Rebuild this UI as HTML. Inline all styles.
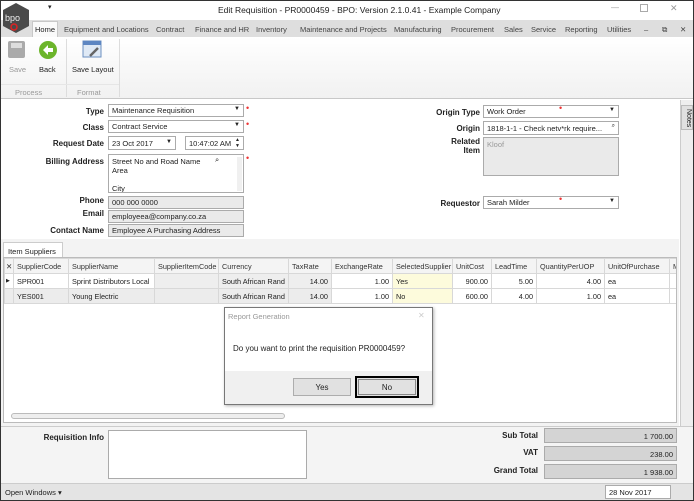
<!DOCTYPE html>
<html><head><meta charset="utf-8"><style>
*{box-sizing:border-box;margin:0;padding:0}
body{width:694px;height:501px;overflow:hidden;font-family:"Liberation Sans",sans-serif;font-size:8px;color:#222;background:#fff;position:relative}
.a{position:absolute}
.lbl{position:absolute;font-weight:bold;font-size:8px;text-align:right;color:#222}
.box{position:absolute;border:1px solid #ababab;background:#fff;font-size:7.5px;padding:2px 3px;white-space:nowrap;overflow:hidden}
.g{background:#eaeaea}
.req{position:absolute;color:#e33;font-size:9px}
.dd{position:absolute;right:3px;top:1px;font-size:6px}
table{border-collapse:collapse;font-size:7.3px}
td{border:1px solid #d8d8d8;height:15px;padding:0 3px;white-space:nowrap;overflow:hidden}
.r{text-align:right}
</style></head><body>
<div class="a" style="left:0;top:0;width:694px;height:501px;border:1px solid #333"></div>
<!-- title -->
<div class="a" style="left:1px;top:1px;width:692px;height:19px;background:#fff"></div>
<div class="a" style="left:218px;top:5px;font-size:8.5px">Edit Requisition - PR0000459 - BPO: Version 2.1.0.41 - Example Company</div>
<div class="a" style="left:48px;top:3px;font-size:7px">▾</div>
<div class="a" style="left:611px;top:3px;color:#999">—</div>
<div class="a" style="left:640px;top:4px;width:8px;height:8px;border:1px solid #aaa"></div>
<div class="a" style="left:670px;top:3px;color:#999;font-size:9px">✕</div>
<!-- tabs -->
<div class="a" style="left:1px;top:20px;width:692px;height:17px;background:#dedede"></div>
<div class="a" style="left:32px;top:21px;width:26px;height:17px;background:#fafafa;border:1px solid #c8c8c8;border-bottom:none"></div>
<div class="a" style="left:35px;top:25px;font-size:7.5px;white-space:nowrap;word-spacing:0"><span>Home</span>
<span style="position:absolute;left:29px;color:#444">Equipment and Locations</span>
<span style="position:absolute;left:121px;color:#444">Contract</span>
<span style="position:absolute;left:160px;color:#444">Finance and HR</span>
<span style="position:absolute;left:221px;color:#444">Inventory</span>
<span style="position:absolute;left:265px;color:#444">Maintenance and Projects</span>
<span style="position:absolute;left:359px;color:#444">Manufacturing</span>
<span style="position:absolute;left:416px;color:#444">Procurement</span>
<span style="position:absolute;left:469px;color:#444">Sales</span>
<span style="position:absolute;left:496px;color:#444">Service</span>
<span style="position:absolute;left:530px;color:#444">Reporting</span>
<span style="position:absolute;left:572px;color:#444">Utilities</span>
<span style="position:absolute;left:609px;color:#444">–</span>
<span style="position:absolute;left:627px;color:#444">⧉</span>
<span style="position:absolute;left:645px;color:#444">✕</span></div>
<!-- logo -->
<svg class="a" style="left:2px;top:2px;z-index:5" width="28" height="33"><polygon points="14,1 27,8 27,24 14,31 1,24 1,8" fill="#4a4a4a"/><text x="3" y="19" font-size="9" fill="#eee" font-family="Liberation Sans">bpo</text><circle cx="12" cy="25" r="3" fill="none" stroke="#d22" stroke-width="1.5"/></svg>
<!-- ribbon -->
<div class="a" style="left:1px;top:37px;width:692px;height:62px;background:linear-gradient(#fff,#f1f1f1);border-bottom:1px solid #c8c8c8"></div>
<div class="a" style="left:66px;top:39px;width:1px;height:58px;background:#ddd"></div>
<div class="a" style="left:119px;top:39px;width:1px;height:58px;background:#ddd"></div>
<div class="a" style="left:1px;top:84px;width:118px;height:1px;background:#e6e6e6"></div>
<div class="a" style="left:8px;top:41px;width:17px;height:17px;background:#aaa;border-radius:2px"><div style="margin:2px 3px;width:11px;height:5px;background:#ddd"></div></div>
<svg class="a" style="left:38px;top:40px" width="20" height="20"><circle cx="10" cy="10" r="9" fill="#6cb52b"/><path d="M5 10 L10 5 L10 8 L15 8 L15 12 L10 12 L10 15Z" fill="#fff"/></svg>
<svg class="a" style="left:82px;top:40px" width="22" height="20"><rect x="1" y="1" width="18" height="16" fill="#dfe9f5" stroke="#6b8fc0"/><rect x="1" y="1" width="18" height="4" fill="#5d86c2"/><path d="M8 16 L16 8" stroke="#666" stroke-width="2.5"/></svg>
<div class="a" style="left:9px;top:65px;color:#999;font-size:7.5px">Save</div>
<div class="a" style="left:39px;top:65px;font-size:7.5px">Back</div>
<div class="a" style="left:72px;top:65px;font-size:7.5px">Save Layout</div>
<div class="a" style="left:15px;top:88px;color:#999;font-size:7.5px">Process</div>
<div class="a" style="left:77px;top:88px;color:#999;font-size:7.5px">Format</div>
<!-- form -->
<div class="lbl" style="left:20px;top:107px;width:84px">Type</div>
<div class="box" style="left:108px;top:104px;width:136px;height:13px;padding-top:1px">Maintenance Requisition<span class="dd">▼</span></div><div class="req" style="left:246px;top:103px">•</div>
<div class="lbl" style="left:20px;top:123px;width:84px">Class</div>
<div class="box" style="left:108px;top:120px;width:136px;height:13px;padding-top:1px">Contract Service<span class="dd">▼</span></div><div class="req" style="left:246px;top:119px">•</div>
<div class="lbl" style="left:20px;top:139px;width:84px">Request Date</div>
<div class="box" style="left:108px;top:136px;width:68px;height:14px;padding-top:2px">23 Oct 2017<span class="dd" style="top:2px">▼</span></div>
<div class="box" style="left:185px;top:136px;width:59px;height:14px;padding-top:2px">10:47:02 AM<span class="dd" style="top:0;font-size:5px;line-height:6px">▲<br>▼</span></div>
<div class="lbl" style="left:20px;top:157px;width:84px">Billing Address</div>
<div class="box" style="left:108px;top:154px;width:136px;height:39px;white-space:normal;line-height:9px">Street No and Road Name<br>Area<br><br>City<span class="a" style="left:106px;top:0">⌕</span><span class="a" style="right:1px;top:2px;width:5px;height:34px;background:#f0f0f0"></span></div><div class="req" style="left:246px;top:153px">•</div>
<div class="lbl" style="left:20px;top:196px;width:84px">Phone</div>
<div class="box g" style="left:108px;top:196px;width:136px;height:13px;padding-top:1px">000 000 0000</div>
<div class="lbl" style="left:20px;top:209px;width:84px">Email</div>
<div class="box g" style="left:108px;top:210px;width:136px;height:13px;padding-top:1px">employeea@company.co.za</div>
<div class="lbl" style="left:20px;top:226px;width:84px">Contact Name</div>
<div class="box g" style="left:108px;top:224px;width:136px;height:13px;padding-top:1px">Employee A Purchasing Address</div>
<div class="lbl" style="left:400px;top:108px;width:80px">Origin Type</div>
<div class="box" style="left:483px;top:105px;width:136px;height:13px;padding-top:1px">Work Order<span class="dd">▼</span></div><div class="req" style="left:559px;top:103px">•</div>
<div class="lbl" style="left:400px;top:124px;width:80px">Origin</div>
<div class="box" style="left:483px;top:121px;width:136px;height:14px;padding-top:2px">1818-1-1 - Check netv*rk require...<span class="dd">⌕</span></div>
<div class="lbl" style="left:400px;top:137px;width:80px;line-height:9px">Related<br>Item</div>
<div class="box g" style="left:483px;top:137px;width:136px;height:39px;color:#999">Kloof</div>
<div class="lbl" style="left:400px;top:199px;width:80px">Requestor</div>
<div class="box" style="left:483px;top:196px;width:136px;height:13px;padding-top:1px">Sarah Milder<span class="dd">▼</span></div><div class="req" style="left:559px;top:194px">•</div>
<!-- notes strip -->
<div class="a" style="left:680px;top:100px;width:13px;height:326px;background:#eee;border-left:1px solid #ccc"></div>
<div class="a" style="left:681px;top:105px;width:12px;height:25px;background:#e0e0e0;border:1px solid #bbb;writing-mode:vertical-rl;font-size:7px;padding-top:3px">Notes</div>
<!-- grid -->
<div class="a" style="left:1px;top:239px;width:678px;height:187px;background:#f3f3f3"></div>
<div class="a" style="left:3px;top:242px;width:60px;height:16px;background:#fff;border:1px solid #ccc;border-bottom:none;font-size:7.5px;padding:4px 4px">Item Suppliers</div>
<div class="a" style="left:3px;top:257px;width:674px;height:166px;background:#fff;border:1px solid #bbb;overflow:hidden">
<table style="width:720px;table-layout:fixed">
<colgroup><col style="width:9px"><col style="width:55px"><col style="width:86px"><col style="width:64px"><col style="width:70px"><col style="width:43px"><col style="width:61px"><col style="width:60px"><col style="width:39px"><col style="width:45px"><col style="width:68px"><col style="width:65px"><col style="width:55px"></colgroup>
<tr style="background:#f4f4f4;color:#333"><td style="padding:0 1px">✕</td><td>SupplierCode</td><td>SupplierName</td><td>SupplierItemCode</td><td>Currency</td><td>TaxRate</td><td>ExchangeRate</td><td>SelectedSupplier</td><td>UnitCost</td><td>LeadTime</td><td>QuantityPerUOP</td><td>UnitOfPurchase</td><td>Mi</td></tr>
<tr><td style="padding:0 1px;font-size:5px">▶</td><td>SPR001</td><td>Sprint Distributors Local</td><td style="background:#eee"></td><td style="background:#eee">South African Rand</td><td class="r" style="background:#eee">14.00</td><td class="r">1.00</td><td style="background:#fdfbdc">Yes</td><td class="r">900.00</td><td class="r">5.00</td><td class="r">4.00</td><td>ea</td><td></td></tr>
<tr style="background:#ececec"><td></td><td>YES001</td><td>Young Electric</td><td></td><td>South African Rand</td><td class="r">14.00</td><td class="r" style="background:#fff">1.00</td><td style="background:#fdfbdc">No</td><td class="r" style="background:#fff">600.00</td><td class="r" style="background:#fff">4.00</td><td class="r" style="background:#fff">1.00</td><td style="background:#fff">ea</td><td style="background:#fff"></td></tr>
</table>
<div class="a" style="left:7px;top:155px;width:274px;height:6px;border:1px solid #bbb;border-radius:3px;background:#eee"></div>
</div>
<!-- dialog -->
<div class="a" style="left:224px;top:307px;width:209px;height:98px;background:#fff;border:1px solid #777;box-shadow:1px 1px 3px rgba(0,0,0,.3)">
<div class="a" style="left:3px;top:4px;color:#999;font-size:7.5px">Report Generation</div>
<div class="a" style="left:193px;top:3px;color:#ccc;font-size:8px">✕</div>
<div class="a" style="left:8px;top:36px;font-size:8px">Do you want to print the requisition PR0000459?</div>
<div class="a" style="left:0;top:63px;width:207px;height:33px;background:#f0f0f0"></div>
<div class="a" style="left:68px;top:70px;width:58px;height:18px;background:#e1e1e1;border:1px solid #adadad;text-align:center;padding-top:4px;font-size:8px">Yes</div>
<div class="a" style="left:130px;top:68px;width:64px;height:22px;border:2px solid #000;background:#e1e1e1;text-align:center;padding-top:5px;font-size:8px"><div class="a" style="left:1px;top:1px;right:1px;bottom:1px;border:1px solid #888"></div>No</div>
</div>
<!-- bottom -->
<div class="a" style="left:1px;top:426px;width:692px;height:57px;background:#f4f4f4;border-top:1px solid #ccc"></div>
<div class="lbl" style="left:20px;top:433px;width:84px">Requisition Info</div>
<div class="box" style="left:108px;top:430px;width:199px;height:49px"></div>
<div class="lbl" style="left:450px;top:431px;width:88px">Sub Total</div>
<div class="box" style="left:544px;top:428px;width:133px;height:15px;background:#d4d4d4;text-align:right;padding-top:3px">1 700.00</div>
<div class="lbl" style="left:450px;top:448px;width:88px">VAT</div>
<div class="box" style="left:544px;top:446px;width:133px;height:15px;background:#d4d4d4;text-align:right;padding-top:3px">238.00</div>
<div class="lbl" style="left:450px;top:466px;width:88px">Grand Total</div>
<div class="box" style="left:544px;top:464px;width:133px;height:15px;background:#d4d4d4;text-align:right;padding-top:3px">1 938.00</div>
<div class="a" style="left:1px;top:483px;width:692px;height:17px;background:#e4e4e4;border-top:1px solid #ccc"></div>
<div class="a" style="left:5px;top:488px;font-size:7.5px">Open Windows ▾</div>
<div class="box" style="left:605px;top:485px;width:66px;height:14px;padding-top:2px">28 Nov 2017</div>
</body></html>
